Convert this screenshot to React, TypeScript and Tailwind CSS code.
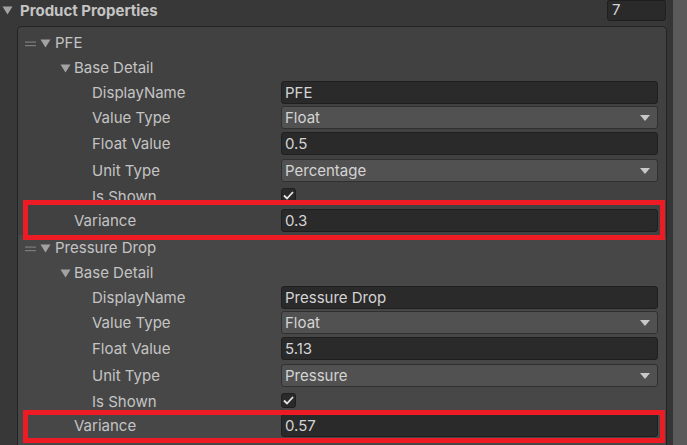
import React from "react";

const Tri = ({ className = "" }: { className?: string }) => (
  <svg width="11" height="9" viewBox="0 0 11 9" className={className}>
    <polygon points="0.5,0.5 10.5,0.5 5.5,8.5" fill="#a2a2a2" />
  </svg>
);

const Handle = () => (
  <svg width="11" height="6" viewBox="0 0 11 6">
    <rect x="0" y="0.5" width="11" height="1.2" fill="#7c7c7c" />
    <rect x="0" y="4" width="11" height="1.2" fill="#7c7c7c" />
  </svg>
);

const TextField = ({ value }: { value: string }) => (
  <div className="h-[23px] flex-1 rounded-[3px] border border-[#1f1f1f] bg-[#2a2a2a] pl-[3px] flex items-center text-[15px] text-[#d4d4d4]">
    <span className="relative top-[1px]">{value}</span>
  </div>
);

const Dropdown = ({ value }: { value: string }) => (
  <div className="h-[23px] flex-1 rounded-[3px] border border-[#303030] bg-[#515151] pl-[3px] pr-[7px] flex items-center justify-between text-[15px] text-[#d4d4d4]">
    <span className="relative top-[1px]">{value}</span>
    <svg width="10" height="6" viewBox="0 0 10 6">
      <polygon points="0,0 10,0 5,6" fill="#c8c8c8" />
    </svg>
  </div>
);

const Check = () => (
  <div className="w-[15px] h-[15px] rounded-[3px] border border-[#1f1f1f] bg-[#2a2a2a] flex items-center justify-center">
    <svg width="11" height="9" viewBox="0 0 11 9">
      <path d="M1 4.5 L4 7.5 L10 1" stroke="#e6e6e6" strokeWidth="1.8" fill="none" />
    </svg>
  </div>
);

const Row = ({
  h,
  pl,
  label,
  children,
}: {
  h: string;
  pl: string;
  label: React.ReactNode;
  children?: React.ReactNode;
}) => (
  <div className={`flex items-center ${h}`}>
    <div className={`w-[263px] flex-none flex items-center ${pl} text-[15px] text-[#c4c4c4] relative top-[1px]`}>{label}</div>
    <div className="flex-1 flex items-center mr-[8px]">{children}</div>
  </div>
);

const Section = ({
  name,
  display,
  floatValue,
  unit,
  variance,
  bg,
}: {
  name: string;
  display: string;
  floatValue: string;
  unit: string;
  variance: string;
  bg: string;
}) => (
  <div className={bg}>
    <Row
      h="h-[25px]"
      pl="pl-[7px]"
      label={
        <span className="flex items-center">
          <Handle />
          <Tri className="ml-[4px]" />
          <span className="ml-[4px]">{name}</span>
        </span>
      }
    />
    <Row
      h="h-[25px]"
      pl="pl-[42px]"
      label={
        <span className="flex items-center">
          <Tri />
          <span className="ml-[3px]">Base Detail</span>
        </span>
      }
    />
    <Row h="h-[25px]" pl="pl-[74px]" label="DisplayName">
      <TextField value={display} />
    </Row>
    <Row h="h-[25px]" pl="pl-[74px]" label="Value Type">
      <Dropdown value="Float" />
    </Row>
    <Row h="h-[27px]" pl="pl-[74px]" label="Float Value">
      <TextField value={floatValue} />
    </Row>
    <Row h="h-[27px]" pl="pl-[74px]" label="Unit Type">
      <Dropdown value={unit} />
    </Row>
    <Row h="h-[22px]" pl="pl-[74px]" label={<span className="relative top-[1px]">Is Shown</span>}>
      <Check />
    </Row>
    <Row h="h-[29px]" pl="pl-[56px]" label="Variance">
      <TextField value={variance} />
    </Row>
  </div>
);

export default function App() {
  return (
    <div
      className="relative w-[687px] h-[445px] overflow-hidden bg-[#383838] flex"
      style={{ fontFamily: "Inter, 'Noto Sans', sans-serif" }}
    >
      <div className="w-[667px] flex-none flex flex-col">
        <div className="h-[26px] flex-none flex items-start">
          <div className="h-[21px] flex items-center pl-[2px]">
            <Tri />
          </div>
          <div className="h-[21px] flex items-center ml-[7px] text-[15px] font-bold text-[#c4c4c4] flex-1">
            <span className="relative top-[1px]">Product Properties</span>
          </div>
          <div className="w-[59px] h-[21px] mr-[1px] rounded-b-[3px] rounded-t-[2px] border border-[#1f1f1f] bg-[#2a2a2a] pl-[4px] flex items-center text-[15px] text-[#d4d4d4]">
            7
          </div>
        </div>
        <div className="ml-[17px] flex-1 rounded-t-[5px] border border-[#232323] border-b-0 bg-[#414141] pt-[3px] flex flex-col">
          <Section
            name="PFE"
            display="PFE"
            floatValue="0.5"
            unit="Percentage"
            variance="0.3"
            bg="bg-[#414141]"
          />
          <div className="flex-1 bg-[#474747]">
            <Section
              name="Pressure Drop"
              display="Pressure Drop"
              floatValue="5.13"
              unit="Pressure"
              variance="0.57"
              bg="bg-[#474747]"
            />
          </div>
        </div>
      </div>
      <div className="w-[6px] flex-none bg-[#353535]" />
      <div className="flex-1 bg-[#5a5a5a]" />

      <div className="absolute left-[23px] top-[200px] w-[642px] h-[40px] border-[5px] border-[#ed1c24]" />
      <div className="absolute left-[23px] top-[410px] w-[642px] h-[33px] border-[5px] border-[#ed1c24]" />
    </div>
  );
}
